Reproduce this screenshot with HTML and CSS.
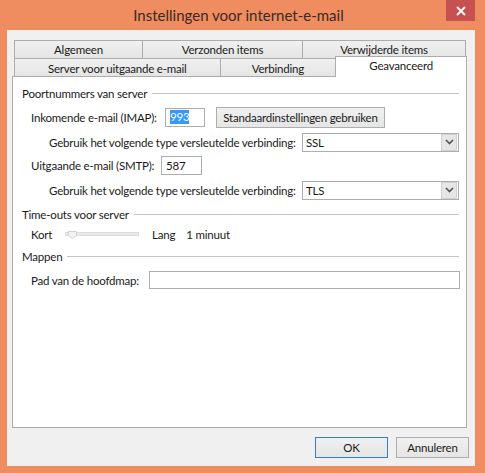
FILE: index.html
```html
<!DOCTYPE html>
<html lang="nl">
<head>
<meta charset="UTF-8">
<title>Instellingen voor internet-e-mail</title>
<link rel="stylesheet" href="styles.css">
</head>
<body>

<div id="window">

<div id="titlebar">
<span class="title">Instellingen voor internet-e-mail</span>
<div class="closebtn">
<svg width="10" height="10" viewBox="0 0 10 10"><path d="M1 1 L9 9 M9 1 L1 9" stroke="#fff" stroke-width="1.8"/></svg>
</div>
</div><!-- titlebar -->

<div id="client">

<div id="tabs">
<div class="tabrow">
<div class="tab w128">Algemeen</div>
<div class="tab w160">Verzonden items</div>
<div class="tab w164 last">Verwijderde items</div>
</div>
<div class="tabrow">
<div class="tab w206 low">Server voor uitgaande e-mail</div>
<div class="tab w116 low">Verbinding</div>
<div class="tab w132 last selected">Geavanceerd</div>
</div>
</div><!-- tabs -->

<div id="panel">

<div class="group">
<span>Poortnummers van server</span><div class="rule"></div>
</div>

<div class="row r-imap">
<label class="lbl w134" for="imap">Inkomende e-mail (IMAP):</label>
<div class="textbox w40" id="imap"><span class="sel">993</span></div>
<button class="btn w169" type="button">Standaardinstellingen gebruiken</button>
</div>

<div class="row r-enc">
<label class="lbl sub w253">Gebruik het volgende type versleutelde verbinding:</label>
<div class="combo"><span>SSL</span><div class="drop"><svg width="9" height="6" viewBox="0 0 9 6"><path d="M1 1 L4.5 4.5 L8 1" stroke="#555" stroke-width="1.6" fill="none"/></svg></div></div>
</div>

<div class="row r-smtp">
<label class="lbl w130" for="smtp">Uitgaande e-mail (SMTP):</label>
<div class="textbox w41" id="smtp">587</div>
</div>

<div class="row r-enc">
<label class="lbl sub w253">Gebruik het volgende type versleutelde verbinding:</label>
<div class="combo"><span>TLS</span><div class="drop"><svg width="9" height="6" viewBox="0 0 9 6"><path d="M1 1 L4.5 4.5 L8 1" stroke="#555" stroke-width="1.6" fill="none"/></svg></div></div>
</div>

<div class="group g-time">
<span>Time-outs voor server</span><div class="rule"></div>
</div>

<div class="row r-slider">
<span class="lbl w34">Kort</span>
<svg class="slider" width="74" height="10" viewBox="0 0 74 10">
<rect x="0.5" y="3.5" width="73" height="3" fill="#e9e9e9" stroke="#dcdcdc"/>
<path d="M3.5 2.5 H11.5 V6.5 L7.5 9.5 L3.5 6.5 Z" fill="#f2f2f2" stroke="#d2d2d2"/>
</svg>
<span class="lang">Lang</span>
<span>1 minuut</span>
</div>

<div class="group g-map">
<span>Mappen</span><div class="rule"></div>
</div>

<div class="row r-path">
<label class="lbl w118" for="path">Pad van de hoofdmap:</label>
<div class="textbox wide" id="path"></div>
</div>

</div><!-- panel -->

<div id="footer">
<button class="btn okbtn" type="button">OK</button>
<button class="btn dlgbtn" type="button">Annuleren</button>
</div><!-- footer -->

</div><!-- client -->

</div><!-- window -->

</body>
</html>
```

FILE: styles.css
```css
body {
margin: 0;
padding: 0;
background: #ef8c60;
font-family: Lato, "Open Sans", sans-serif;
font-size: 11.5px;
letter-spacing: -0.2px;
color: #1a1a1a;
white-space: nowrap;
}
#window {
width: 485px;
height: 473px;
display: flex;
flex-direction: column;
background: #ef8c60;
}
#titlebar {
position: relative;
height: 30px;
display: flex;
align-items: center;
justify-content: center;
}
.title {
font-size: 15px;
letter-spacing: 0;
color: #3b2a22;
margin-left: -8px;
}
.closebtn {
position: absolute;
left: 446px;
top: 0;
width: 29px;
height: 21px;
background: #c75050;
display: flex;
align-items: center;
justify-content: center;
}
#client {
height: 436px;
margin: 0 10px 0 7px;
box-sizing: border-box;
padding: 10px 8px 8px 5px;
background: #f0f0f0;
display: flex;
flex-direction: column;
}
#tabs {
margin-left: 2px;
}
.tabrow {
display: flex;
height: 18px;
align-items: flex-end;
}
.tab {
box-sizing: border-box;
height: 18px;
border-top: 1px solid #acacac;
border-left: 1px solid #acacac;
background: linear-gradient(#f0f0f0, #e5e5e5);
display: flex;
align-items: center;
justify-content: center;
padding-bottom: 1px;
}
.tab.low {
padding-top: 2px;
padding-bottom: 0;
}
.tab.last {
border-right: 1px solid #acacac;
}
.tab.selected {
position: relative;
z-index: 1;
height: 21px;
margin-bottom: -1px;
background: #fff;
padding-bottom: 3px;
}
.w128 { width: 128px; }
.w160 { width: 160px; }
.w164 { width: 164px; }
.w206 { width: 206px; }
.w116 { width: 116px; }
.w132 { width: 132px; }
#panel {
box-sizing: border-box;
width: 455px;
height: 353px;
border: 1px solid #acacac;
background: #fff;
padding: 7px 7px 0 9px;
}
.group {
display: flex;
align-items: center;
height: 18px;
}
.rule {
flex: 1;
height: 1px;
background: #c4c4c4;
margin-left: 5px;
}
.g-time {
margin-top: 4px;
}
.g-map {
margin-top: 3px;
}
.row {
display: flex;
align-items: center;
padding-left: 9px;
}
.row > * {
flex: none;
}
.r-imap {
height: 24px;
margin-top: 3px;
}
.r-enc {
height: 22px;
margin-top: 2px;
}
.r-smtp {
height: 24px;
}
.r-slider {
height: 20px;
margin-top: 1px;
}
.r-path {
height: 24px;
margin-top: 3px;
}
.lbl.sub {
padding-left: 18px;
}
.w134 { width: 134px; }
.w130 { width: 130px; }
.w253 { width: 253px; }
.w118 { width: 118px; }
.w34 { width: 34px; }
.textbox {
box-sizing: border-box;
height: 19px;
border: 1px solid #abadb3;
background: #fff;
padding: 0 4px;
display: flex;
align-items: center;
}
.w40 { width: 40px; }
.w41 { width: 41px; }
.textbox.wide {
width: 311px;
height: 18px;
}
.sel {
background: #3399ff;
color: #fff;
line-height: 14px;
}
.btn {
box-sizing: border-box;
height: 21px;
border: 1px solid #adadad;
background: linear-gradient(#f0f0f0, #e5e5e5);
font-family: inherit;
font-size: inherit;
letter-spacing: inherit;
color: #1a1a1a;
padding: 0;
}
.w169 {
width: 169px;
margin-left: 11px;
}
.combo {
box-sizing: border-box;
width: 157px;
height: 19px;
border: 1px solid #abadb3;
background: #fff;
display: flex;
align-items: center;
justify-content: space-between;
padding: 0 1px 0 3px;
}
.drop {
box-sizing: border-box;
width: 16px;
height: 17px;
background: #e6e6e6;
border: 1px solid #d0d0d0;
display: flex;
align-items: center;
justify-content: center;
}
.lang {
margin-left: 13px;
margin-right: 11px;
}
#footer {
display: flex;
justify-content: flex-end;
gap: 8px;
margin-top: 9px;
margin-right: -2px;
}
.okbtn,
.dlgbtn {
width: 73px;
}
.okbtn {
border-color: #3c7fb1;
}
```
